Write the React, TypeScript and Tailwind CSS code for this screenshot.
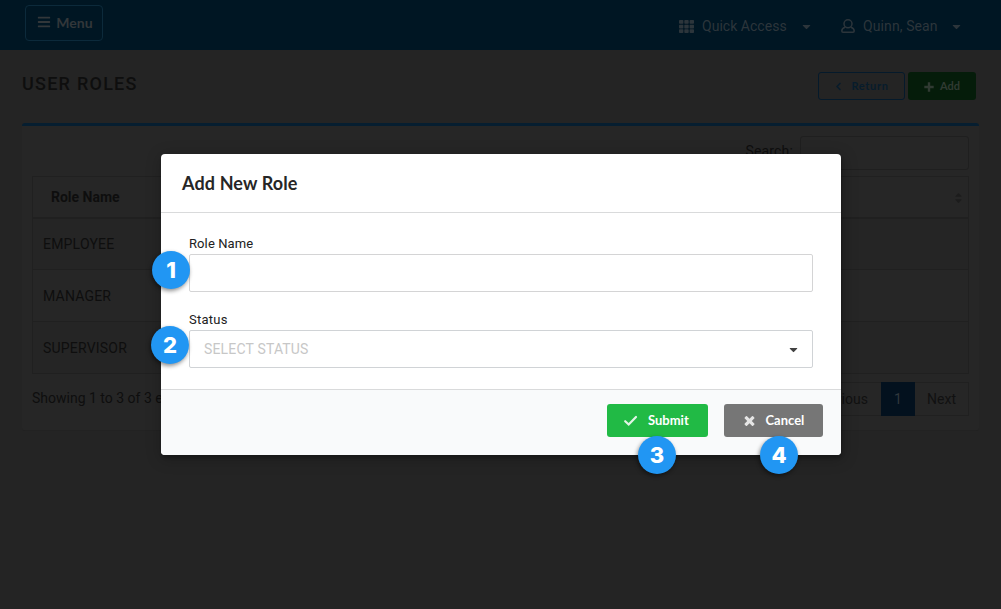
import React from "react";
import { FaBars, FaTh, FaCaretDown, FaChevronLeft, FaSortUp, FaSortDown } from "react-icons/fa";

function UserOutline({ className }: { className?: string }) {
  return (
    <svg viewBox="0 0 14 14" fill="none" stroke="currentColor" strokeWidth="1.5" strokeLinejoin="round" className={className}>
      <circle cx="7" cy="4.800" r="4" />
      <path d="M4 8.200C1.800 8.900 0.800 10.300 0.800 12c0 0.800 0.500 1.200 1.200 1.200h10c0.700 0 1.200-0.400 1.200-1.200 0-1.700-1-3.100-3.200-3.800" />
    </svg>
  );
}

function PlusIcon({ className }: { className?: string }) {
  return (
    <svg viewBox="0 0 10 10" fill="none" stroke="currentColor" strokeWidth="2.400" className={className}>
      <path d="M5 0.300v9.400M0.300 5h9.400" />
    </svg>
  );
}

function CheckIcon({ className }: { className?: string }) {
  return (
    <svg viewBox="0 0 15 15" fill="none" stroke="currentColor" strokeWidth="2.200" strokeLinecap="round" className={className}>
      <path d="M2.200 8.200L5.700 11.500L13 4" />
    </svg>
  );
}

function CrossIcon({ className }: { className?: string }) {
  return (
    <svg viewBox="0 0 1792 1792" fill="currentColor" className={className}>
      <path d="M1490 1322q0 40-28 68l-136 136q-28 28-68 28t-68-28l-294-294-294 294q-28 28-68 28t-68-28l-136-136q-28-28-28-68t28-68l294-294-294-294q-28-28-28-68t28-68l136-136q28-28 68-28t68 28l294 294 294-294q28-28 68-28t68 28l136 136q28 28 28 68t-28 68l-294 294 294 294q28 28 28 68z" />
    </svg>
  );
}

function Marker({ n, className }: { n: number; className: string }) {
  return (
    <span
      className={`absolute z-10 flex size-[38px] items-center justify-center rounded-full bg-[#2196f3] font-['Inter',sans-serif] text-[22px] font-extrabold leading-none text-white shadow-[-1px_2px_4px_rgba(0,0,0,0.45)] ${className}`}
    >
      {n}
    </span>
  );
}

function TopBar() {
  return (
    <header className="flex h-[50px] items-start justify-between bg-[#001623] pl-[25px] pr-[38px] text-[#2c353b]">
      <button className="mt-[5px] flex h-9 w-[78px] items-center justify-center gap-[5px] rounded-[4px] border border-[#0c2a3b] pb-[2px] pl-[2px] font-['Lato',sans-serif] text-[14px] font-bold text-[#32373a]">
        <FaBars className="size-[14px]" />
        Menu
      </button>
      <nav className="flex h-[52px] items-center text-[14px]">
        <FaTh className="size-[15px]" />
        <span className="ml-[8px] w-[98px] tracking-[0.03px]">Quick Access</span>
        <FaCaretDown className="size-[13px]" />
        <UserOutline className="ml-[28px] size-[14px]" />
        <span className="ml-[8px] w-[87px] tracking-[0.1px]">Quinn, Sean</span>
        <FaCaretDown className="size-[13px]" />
      </nav>
    </header>
  );
}

function RolesPage() {
  return (
    <div className="h-[609px] bg-[#242424] text-[14px] text-[#0e0e0e]">
      <TopBar />
      <main className="px-[22px]">
        <div className="flex h-[73px] items-start justify-between pr-[3px] pt-[22px]">
          <h1 className="mt-[-2px] text-[18px] font-medium leading-[28px] tracking-[1.25px]">USER ROLES</h1>
          <div className="flex gap-[3px] font-['Lato',sans-serif] text-[11px] font-bold">
            <button className="flex h-7 w-[87px] items-center justify-center gap-[8px] rounded-[3px] border border-[#051a2b] pt-px tracking-[0.65px] text-[#071c2c]">
              <FaChevronLeft className="size-[9px]" />
              Return
            </button>
            <button className="flex h-7 w-[68px] items-center justify-center gap-[6px] rounded-[3px] bg-[#051c0a] pt-px text-[#303a32]">
              <PlusIcon className="size-[10px]" />
              Add
            </button>
          </div>
        </div>
        <section className="h-[308px] rounded-[3px] border-b border-t-[3px] border-b-[#222222] border-t-[#061e30] bg-[#262626] px-[10px] pt-[10px]">
          <div className="flex h-10 justify-end">
            <label className="mr-[7px] leading-[30px] tracking-[0.15px]">Search:</label>
            <div className="h-[34px] w-[169px] rounded-[3px] border border-[#1f1f1f]" />
          </div>
          <table className="w-full table-fixed border-collapse border border-[#202020] text-left tracking-[0.2px]">
            <thead>
              <tr className="h-[41px] border-b-2 border-[#202020]">
                <th className="pb-0 pl-[18px] pr-[5px] pt-[2px] font-bold tracking-normal">
                  <div className="flex items-center justify-between">
                    Role Name
                    <span className="relative block h-4 w-[10px] text-[#1c1c1c]">
                      <FaSortUp className="absolute left-0 top-[2px] size-[11px]" />
                      <FaSortDown className="absolute left-0 top-[3px] size-[11px]" />
                    </span>
                  </div>
                </th>
              </tr>
            </thead>
            <tbody>
              {["EMPLOYEE", "MANAGER", "SUPERVISOR"].map((role) => (
                <tr key={role} className="h-[52px] border-b border-[#202020] odd:bg-[#252525]">
                  <td className="pb-0 pl-[10px] pt-[2px]">{role}</td>
                </tr>
              ))}
            </tbody>
          </table>
          <div className="flex justify-between pt-[8px]">
            <p className="leading-[32px]">Showing 1 to 3 of 3 entries</p>
            <div className="flex h-[34px] border border-[#202020] leading-[32px] text-[#111111]">
              <span className="w-[80px] pl-[13px]">Previous</span>
              <span className="-my-px h-[34px] w-[34px] bg-[#03111e] text-center leading-[34px] text-[#30373c]">1</span>
              <span className="w-[53px] text-center">Next</span>
            </div>
          </div>
        </section>
      </main>
    </div>
  );
}

function RoleModal() {
  return (
    <div className="absolute left-[161px] top-[154px] h-[301px] w-[680px] rounded-[4px] bg-white shadow-[1px_3px_3px_rgba(0,0,0,0.2),1px_3px_15px_2px_rgba(0,0,0,0.2)]">
      <h2 className="h-[59px] border-b border-[#d9dadb] pl-[21px] font-['Lato',sans-serif] text-[18px] font-bold leading-[59px] tracking-[0.13px] text-[#262626]">
        Add New Role
      </h2>
      <form className="h-[176px] px-7 pt-[21px] text-[13px] text-[#212121]">
        <label className="block h-5 leading-[20px] tracking-[0.1px]">Role Name</label>
        <div className="h-[38px] rounded-[2px] border border-[#d4d4d5]" />
        <label className="mt-[18px] block h-5 leading-[20px] tracking-[0.25px]">Status</label>
        <div className="flex h-[38px] items-center justify-between rounded-[2px] border border-[#d0d3d6] pl-[14px] pr-[12px] text-[14px] tracking-[0.17px] text-[#c7c7c7]">
          SELECT STATUS
          <FaCaretDown className="size-[13px] text-[#424242]" />
        </div>
      </form>
      <div className="flex h-[66px] justify-end gap-4 rounded-b-[4px] border-t border-[#d9dadb] bg-[#f9fafb] pr-[18px] pt-[14px] font-['Lato',sans-serif] text-[13px] font-bold text-white">
        <button className="flex h-[33px] w-[101px] items-center rounded-[3px] bg-[#21ba45] pl-[16px]">
          <CheckIcon className="mr-[10px] size-[15px] text-[#e2f5e6]" />
          Submit
        </button>
        <button className="flex h-[33px] w-[99px] items-center rounded-[3px] bg-[#767676] pl-[17.500px]">
          <CrossIcon className="mr-[9px] size-[15px] text-[#e5e5e5]" />
          Cancel
        </button>
      </div>
      <Marker n={1} className="left-[-9px] top-[97px]" />
      <Marker n={2} className="left-[-10px] top-[172px]" />
      <Marker n={3} className="left-[477px] top-[282px]" />
      <Marker n={4} className="left-[599px] top-[282px]" />
    </div>
  );
}

export default function App() {
  return (
    <div className="relative h-[609px] w-[1001px] overflow-hidden font-['Roboto',sans-serif]">
      <RolesPage />
      <RoleModal />
    </div>
  );
}
